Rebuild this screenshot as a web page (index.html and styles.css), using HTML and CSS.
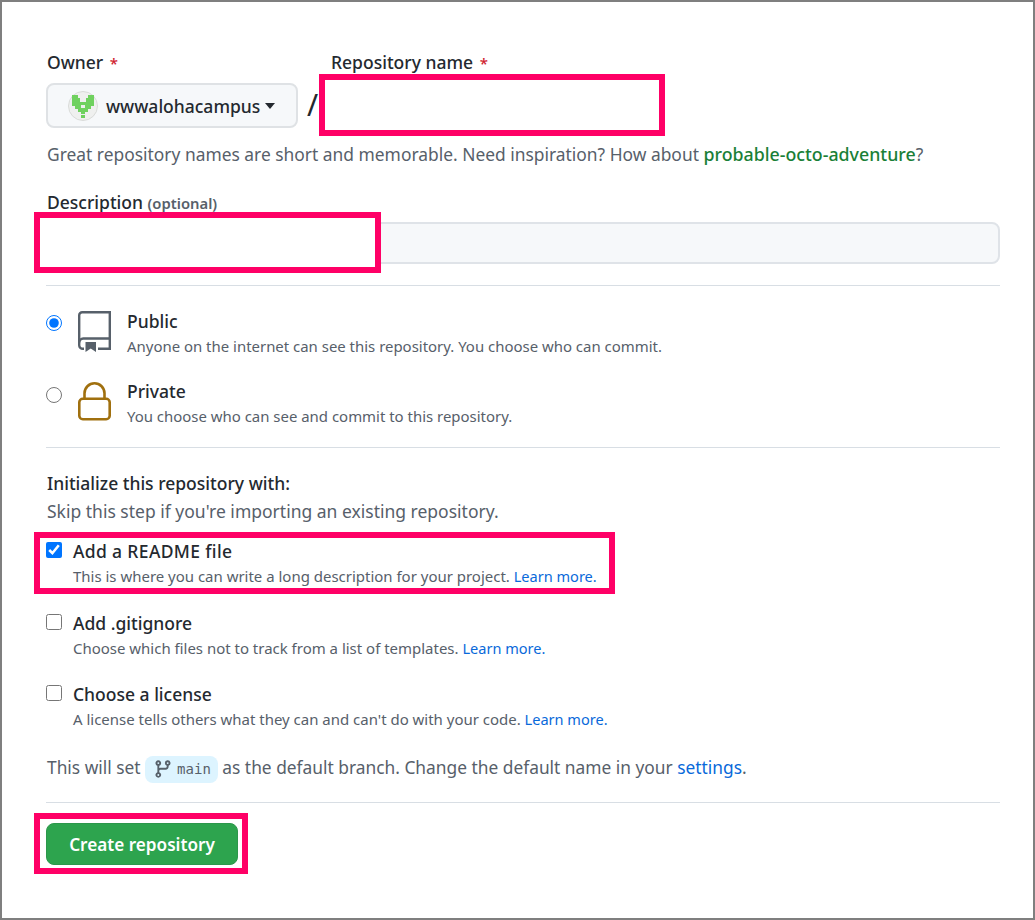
FILE: index.html
```html
<!DOCTYPE html>
<html lang="en">
<head>
<meta charset="utf-8">
<title>Create a new repository</title>
<link rel="stylesheet" href="styles.css">
</head>
<body>
<main class="frame">
  <form class="form">
    <div class="name-row">
      <div class="owner-col">
        <div class="label">Owner <span class="req">*</span></div>
        <button type="button" class="owner-btn">
          <svg class="avatar" viewBox="0 0 30 30" width="30" height="30">
            <circle cx="15" cy="15" r="14.500" fill="#eff0ef" stroke="#d9dbd9"/>
            <path fill="#6fd15f" d="M4 4h6v3h2v4h6V7h2V4h6v11h-3v3h-3v3h-3v2h-4v-2h-3v-3H7v-3H4zM13 24h4v3h-4z"/>
            <path fill="#eff0ef" d="M13 14h4v3h-4z"/>
          </svg>
          <span class="owner-name">wwwalohacampus</span>
          <span class="caret"></span>
        </button>
      </div>
      <div class="slash">/</div>
      <div class="name-col">
        <div class="label label-name">Repository name <span class="req">*</span></div>
        <div class="redact redact-name"></div>
      </div>
    </div>
    <p class="hint">Great repository names are short and memorable. Need inspiration? How about <span class="suggest">probable-octo-adventure</span>?</p>

    <div class="desc-label label">Description <span class="opt">(optional)</span></div>
    <div class="desc-wrap">
      <div class="desc-input"></div>
      <div class="redact redact-desc"></div>
    </div>

    <hr class="rule rule-first">

    <div class="vis vis-public">
      <input type="radio" name="vis" class="radio" checked>
      <svg class="vis-icon" viewBox="0 0 33 41" width="33" height="41" fill="none" stroke="#57606a" stroke-width="2.400">
        <path d="M6 37.800H5a3.600 3.600 0 0 1-3.800-3.600V4.200a3 3 0 0 1 3-3h27.600v36.600H20"/>
        <path d="M1.200 31.500a4 4 0 0 1 4-4h26.600"/>
        <path d="M7.500 31h10.500v10l-5.250-3.500-5.250 3.500z" fill="#57606a" stroke="none"/>
      </svg>
      <div class="vis-text">
        <div class="title">Public</div>
        <div class="sub">Anyone on the internet can see this repository. You choose who can commit.</div>
      </div>
    </div>
    <div class="vis vis-private">
      <input type="radio" name="vis" class="radio">
      <svg class="vis-icon" viewBox="0 0 33 40" width="33" height="40" fill="none" stroke="#a0700f" stroke-width="2.600">
        <rect x="1.300" y="16.800" width="30.400" height="20.400" rx="3.500"/>
        <path d="M6.500 16.800v-5.500a10 10 0 0 1 20 0v5.500"/>
      </svg>
      <div class="vis-text">
        <div class="title">Private</div>
        <div class="sub">You choose who can see and commit to this repository.</div>
      </div>
    </div>

    <hr class="rule rule-second">

    <div class="init-title label">Initialize this repository with:</div>
    <p class="skip">Skip this step if you're importing an existing repository.</p>

    <div class="check check-readme">
      <input type="checkbox" class="box" checked>
      <div class="check-text">
        <div class="title title-readme">Add a README file</div>
        <div class="sub">This is where you can write a long description for your project. <a class="link">Learn more.</a></div>
      </div>
      <div class="redact redact-readme"></div>
    </div>
    <div class="check check-ignore">
      <input type="checkbox" class="box">
      <div class="check-text">
        <div class="title">Add .gitignore</div>
        <div class="sub">Choose which files not to track from a list of templates. <a class="link">Learn more.</a></div>
      </div>
    </div>
    <div class="check check-license">
      <input type="checkbox" class="box">
      <div class="check-text">
        <div class="title">Choose a license</div>
        <div class="sub">A license tells others what they can and can't do with your code. <a class="link">Learn more.</a></div>
      </div>
    </div>

    <p class="branch-line">This will set <span class="pill"><svg class="branch-icon" viewBox="0 0 16 16" width="20" height="20"><path fill="#57606a" fill-rule="evenodd" d="M9.500 3.250a2.250 2.250 0 113 2.122V6A2.500 2.500 0 0110 8.500H6a1 1 0 00-1 1v1.128a2.251 2.251 0 11-1.500 0V5.372a2.250 2.250 0 111.500 0v1.836A2.492 2.492 0 016 7h4a1 1 0 001-1v-.628A2.250 2.250 0 019.500 3.250zm-6 0a.750.750 0 101.500 0 .750.750 0 00-1.500 0zm8.250-.750a.750.750 0 100 1.500.750.750 0 000-1.500zM4.250 12a.750.750 0 100 1.500.750.750 0 000-1.500z"/></svg><code class="mono">main</code></span> as the default branch. Change the default name in your <a class="link">settings</a>.</p>

    <hr class="rule rule-third">

    <div class="submit-wrap">
      <button type="button" class="create">Create repository</button>
      <div class="redact redact-create"></div>
    </div>
  </form>
</main>
</body>
</html>
```

FILE: styles.css
```css
* { box-sizing: border-box; }
html, body { margin: 0; padding: 0; background: #fff; }
body {
  font-family: "Noto Sans", "Open Sans", "Liberation Sans", sans-serif;
  color: #24292f;
}
.frame {
  width: 1035px;
  height: 920px;
  border: 2px solid #7f7f7f;
  overflow: hidden;
  background: #fff;
}
.form {
  width: 954px;
  margin-left: 44px;
  padding-top: 48px;
}
.label, .title {
  font-size: 17.500px;
  line-height: 24px;
  font-weight: 500;
}
.label, .hint, .skip, .branch-line { padding-left: 1px; }
.label-name { padding-left: 0; }
.title-readme { letter-spacing: 0.350px; }
.req { color: #cf222e; font-size: 15px; line-height: 1; margin-left: 2px; }
.opt { font-size: 14.800px; line-height: 1; color: #57606a; font-weight: 600; }
.name-row { display: flex; }
.owner-col { width: 252px; }
.owner-btn {
  display: flex;
  align-items: center;
  width: 252px;
  height: 45px;
  margin-top: 9px;
  padding: 0 0 0 20px;
  background: #f6f8fa;
  border: 2px solid #dfe2e5;
  border-radius: 8px;
  color: #24292f;
  font: inherit;
}
.avatar { flex: none; }
.owner-name {
  margin-left: 8px;
  font-size: 17.500px;
  font-weight: 500;
}
.caret {
  margin-left: 5px;
  border-top: 6px solid #24292f;
  border-left: 5.500px solid transparent;
  border-right: 5.500px solid transparent;
}
.slash {
  width: 33px;
  padding: 35px 0 0 9px;
  font-size: 30px;
  line-height: 40px;
}
.name-col { position: relative; flex: 1; }
.redact {
  position: absolute;
  border: 6px solid #ff0066;
  background: #fff;
}
.redact-name { left: -12px; top: 24px; width: 346px; height: 62px; }
.hint, .skip, .branch-line {
  margin: 0;
  font-size: 17.500px;
  line-height: 24px;
  color: #57606a;
}
.hint { margin-top: 14px; white-space: nowrap; font-size: 17.400px; }
.suggest { color: #1a7f37; font-weight: 500; font-size: 17.800px; line-height: 1; }
.desc-label { margin-top: 24px; }
.desc-wrap { position: relative; margin-top: 8px; }
.desc-input {
  height: 42px;
  background: #f6f8fa;
  border: 2px solid #dfe3e8;
  border-radius: 8px;
}
.redact-desc { left: -12px; top: -10px; width: 347px; height: 61px; }
.rule { height: 1px; margin: 0; border: 0; background: #d8dee4; }
.rule-first { margin-top: 21px; }
.rule-second { margin-top: 21px; }
.rule-third { margin-top: 23px; }
.vis { display: flex; position: relative; }
.vis-public { margin-top: 23px; }
.vis-private { margin-top: 23px; }
.radio {
  flex: none;
  width: 16px;
  height: 16px;
  margin: 0;
}
.vis-public .radio { margin-top: 6px; }
.vis-private .radio { margin-top: 8px; }
.vis-icon { flex: none; margin-left: 16px; margin-top: 2px; }
.vis-private .vis-icon { margin-top: 3px; }
.vis-text { margin-left: 16px; }
.sub {
  margin-top: 3px;
  font-size: 14.950px;
  line-height: 20px;
  color: #57606a;
}
.init-title { margin-top: 23px; }
.skip { margin-top: 4px; }
.check { display: flex; position: relative; }
.check-readme { margin-top: 16px; }
.check-ignore { margin-top: 25px; }
.check-license { margin-top: 24px; }
.check .sub { font-size: 14.970px; }
.box {
  flex: none;
  width: 16px;
  height: 16px;
  margin: 3px 0 0 0;
}
.check-text { margin-left: 11px; position: relative; z-index: 1; }
.redact-readme {
  left: -12px;
  top: -7px;
  width: 581px;
  height: 62px;
  background: transparent;
}
.link { color: #0969da; }
.check .link { font-size: 14.550px; }
.branch-line { margin-top: 26px; white-space: nowrap; font-size: 17.350px; }
.pill {
  display: inline-flex;
  align-items: center;
  height: 27px;
  vertical-align: middle;
  padding: 0 7px 0 8px;
  margin: -6px 0;
  background: #ddf4ff;
  border-radius: 8px;
}
.branch-icon { flex: none; }
.mono {
  margin-left: 4px;
  font-family: "DejaVu Sans Mono", "Liberation Mono", monospace;
  font-size: 14px;
  color: #57606a;
}
.submit-wrap { position: relative; margin-top: 20px; }
.create {
  display: block;
  width: 192px;
  height: 42px;
  background: #2da44e;
  border: 1px solid #2c974b;
  border-radius: 8px;
  color: #fff;
  font-family: inherit;
  font-size: 17.150px;
  font-weight: 600;
  position: relative;
  z-index: 1;
}
.redact-create {
  left: -12px;
  top: -10px;
  width: 214px;
  height: 61px;
}
```
